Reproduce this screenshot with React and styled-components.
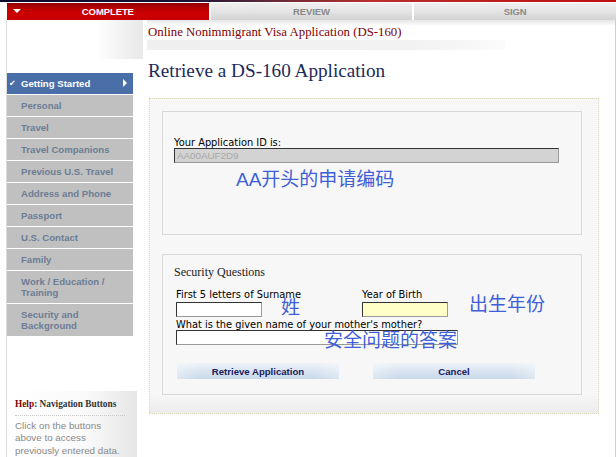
import styled, { createGlobalStyle } from "styled-components";

const GlobalStyle = createGlobalStyle`
  html, body { margin: 0; padding: 0; background: #fff; }
  body { font-family: "Liberation Sans", Arial, sans-serif; }
`;

const navItems = [
  { id: "start", title: "Getting Started", active: true },
  { id: "personal", title: "Personal" },
  { id: "travel", title: "Travel" },
  { id: "companions", title: "Travel Companions" },
  { id: "previous", title: "Previous U.S. Travel" },
  { id: "address", title: "Address and Phone" },
  { id: "passport", title: "Passport" },
  { id: "contact", title: "U.S. Contact" },
  { id: "family", title: "Family" },
  { id: "work", title: "Work / Education / Training", tall: true },
  { id: "security", title: "Security and Background", tall: true },
];

const App = () => {
  return (
    <Root>
      <GlobalStyle />
      <Banner />
      <Tabs>
        <Tab $active>
          <Caret />
          COMPLETE
        </Tab>
        <Tab>REVIEW</Tab>
        <Tab>SIGN</Tab>
      </Tabs>
      <Page>
        <Sidebar>
          <SideTop />
          <Nav>
            {navItems.map(({ id, title, active, tall }) => (
              <NavItem key={id} $active={active} $tall={tall}>
                {active && <Check>✔</Check>}
                <span>{title}</span>
                {active && <Arrow />}
              </NavItem>
            ))}
          </Nav>
          <Help>
            <HelpTitle>
              <em>Help</em>: Navigation Buttons
            </HelpTitle>
            <HelpText>Click on the buttons above to access previously entered data.</HelpText>
          </Help>
        </Sidebar>
        <Main>
          <AppName>Online Nonimmigrant Visa Application (DS-160)</AppName>
          <TitleRule />
          <PageTitle>Retrieve a DS-160 Application</PageTitle>
          <ContentBox>
            <Panel $height={124} $top={25}>
              <Label>Your Application ID is:</Label>
              <TextInput $width={385} $bg="#d3d3d3" readOnly value="AA00AUF2D9" $muted />
              <Note $left={73} $top={57}>AA开头的申请编码</Note>
            </Panel>
            <Panel $height={141} $top={10}>
              <SectionTitle>Security Questions</SectionTitle>
              <FieldRow>
                <Field $width={184} $gap={2}>
                  <Label>First 5 letters of Surname</Label>
                  <TextInput $width={86} readOnly value="" />
                </Field>
                <Field $gap={2}>
                  <Label>Year of Birth</Label>
                  <TextInput $width={86} $bg="#ffffc8" readOnly value="" />
                </Field>
              </FieldRow>
              <Field>
                <Label>What is the given name of your mother's mother?</Label>
                <TextInput $width={282} readOnly value="" />
              </Field>
              <Buttons>
                <Button>Retrieve Application</Button>
                <Button>Cancel</Button>
              </Buttons>
              <Note $left={118} $top={42}>姓</Note>
              <Note $left={306} $top={39}>出生年份</Note>
              <Note $left={161} $top={75}>安全问题的答案</Note>
            </Panel>
          </ContentBox>
        </Main>
      </Page>
    </Root>
  );
};

const Root = styled.div`
  width: 616px;
  height: 457px;
  overflow: hidden;
  background: #fff;
`;

const Banner = styled.div`
  height: 2px;
  background: linear-gradient(to right, #0b0b2e 0%, #14143a 30%, #6a2a3a 45%, #b8302c 60%, #c01010 100%);
  border-bottom: 1px solid #fff;
`;

const Tabs = styled.div`
  display: flex;
  gap: 2px;
  height: 17px;
  margin-left: 7px;
`;

const Tab = styled.div`
  position: relative;
  flex: 1;
  display: flex;
  align-items: center;
  justify-content: center;
  font-family: "Liberation Sans", Arial, sans-serif;
  font-weight: bold;
  font-size: 9.5px;
  letter-spacing: -0.1px;
  color: ${(p) => (p.$active ? "#fff" : "#8a8a8a")};
  background: ${(p) =>
    p.$active
      ? "linear-gradient(to bottom, #8e0000 0%, #b80000 30%, #cc0000 60%, #c80000 100%)"
      : "linear-gradient(to bottom, #f0f0f0 0%, #e4e4e4 50%, #d2d2d2 100%)"};
`;

const Caret = styled.span`
  position: absolute;
  left: 6px;
  top: 6px;
  width: 0;
  height: 0;
  border-left: 4px solid transparent;
  border-right: 4px solid transparent;
  border-top: 4px solid #fff;
`;

const Page = styled.div`
  display: flex;
  margin-left: 6px;
  width: 608px;
  height: 437px;
  border-left: 1px solid #dcdcdc;
  border-right: 1px solid #cfcfcf;
  background: linear-gradient(to bottom, #e6e6e6 0px, #fff 6px);
`;

const Sidebar = styled.div`
  width: 140px;
  flex-shrink: 0;
  display: flex;
  flex-direction: column;
  background: #fff;
`;

const SideTop = styled.div`
  height: 40px;
  width: 136px;
  margin-bottom: 14px;
  background: linear-gradient(to right, #fff 0%, #fff 65%, #e8e8e8 100%);
`;

const Nav = styled.ul`
  list-style: none;
  margin: 0;
  padding: 0;
  width: 126px;
  display: flex;
  flex-direction: column;
  gap: 1px;
`;

const NavItem = styled.li`
  position: relative;
  display: flex;
  align-items: center;
  height: ${(p) => (p.$tall ? "32px" : "21px")};
  padding: 0 10px 0 14px;
  box-sizing: border-box;
  background: ${(p) => (p.$active ? "#4a6ea8" : "#c0c0c0")};
  color: ${(p) => (p.$active ? "#fff" : "#6c7d95")};
  font-family: "Liberation Sans", Arial, sans-serif;
  font-weight: bold;
  font-size: 9.6px;
  line-height: 11px;
`;

const Check = styled.span`
  position: absolute;
  left: 2px;
  top: 5px;
  font-family: "DejaVu Sans", sans-serif;
  font-size: 8px;
  color: #fff;
`;

const Arrow = styled.span`
  position: absolute;
  right: 6px;
  top: 6px;
  width: 0;
  height: 0;
  border-top: 4px solid transparent;
  border-bottom: 4px solid transparent;
  border-left: 4px solid #fff;
`;

const Help = styled.div`
  margin-top: 55px;
  width: 130px;
  flex: 1;
  padding: 7px 12px 0 8px;
  box-sizing: border-box;
  background: linear-gradient(to right, #fff 0%, #fafafa 60%, #e6e6e6 100%);
`;

const HelpTitle = styled.div`
  font-family: "Liberation Serif", "Times New Roman", serif;
  font-weight: bold;
  font-size: 9.3px;
  line-height: 12px;
  color: #333;
  padding-bottom: 5px;
  border-bottom: 1px dotted #c8c8c8;
  em {
    font-style: normal;
    color: #800000;
  }
`;

const HelpText = styled.div`
  margin-top: 4px;
  font-family: "Liberation Sans", Arial, sans-serif;
  font-size: 9.8px;
  line-height: 12.5px;
  color: #8a8a8a;
`;

const Main = styled.div`
  flex: 1;
  padding-top: 4px;
`;

const AppName = styled.div`
  padding-left: 1px;
  font-family: "Liberation Serif", "Times New Roman", serif;
  font-size: 12.8px;
  line-height: 16px;
  color: #800000;
`;

const TitleRule = styled.div`
  height: 10px;
  width: 358px;
  background: linear-gradient(to right, #efefef 0%, #f2f2f2 75%, #fbfbfb 100%);
`;

const PageTitle = styled.h1`
  margin: 10px 0 0 1px;
  font-family: "Liberation Serif", "Times New Roman", serif;
  font-weight: normal;
  font-size: 19.2px;
  line-height: 22px;
  color: #1c2a5a;
`;

const ContentBox = styled.div`
  margin: 16px 0 0 2px;
  width: 450px;
  height: 316px;
  box-sizing: border-box;
  padding: 12px 16px 0 12px;
  display: flex;
  flex-direction: column;
  gap: 19px;
  border: 1px dotted #e0d6b8;
  background: linear-gradient(to bottom, #f7f7f7 0%, #f7f7f7 94%, #ececec 100%);
`;

const Panel = styled.div`
  position: relative;
  height: ${(p) => p.$height}px;
  box-sizing: border-box;
  padding: ${(p) => p.$top}px 10px 0 11px;
  border: 1px solid #d8d8d8;
  background: #f7f7f7;
`;

const Label = styled.div`
  font-family: "DejaVu Sans", Verdana, sans-serif;
  font-size: 9.85px;
  line-height: 11px;
  color: #000;
  white-space: nowrap;
`;

const TextInput = styled.input`
  display: block;
  width: ${(p) => p.$width}px;
  height: 15px;
  box-sizing: border-box;
  margin: 0;
  padding: 0 2px;
  border: 1px solid;
  border-color: #333 #999 #999 #333;
  background: ${(p) => p.$bg || "#fff"};
  font-family: "Liberation Sans", Arial, sans-serif;
  font-size: 9.8px;
  color: ${(p) => (p.$muted ? "#a8a8a8" : "#000")};
  outline: none;
`;

const SectionTitle = styled.div`
  font-family: "Liberation Serif", "Times New Roman", serif;
  font-size: 12px;
  line-height: 15px;
  color: #222;
  margin-bottom: 9px;
`;

const FieldRow = styled.div`
  display: flex;
  margin-bottom: 2px;
`;

const Field = styled.div`
  display: flex;
  flex-direction: column;
  gap: ${(p) => p.$gap || 0}px;
  padding-left: 2px;
  width: ${(p) => (p.$width ? `${p.$width}px` : "auto")};
`;

const Buttons = styled.div`
  display: flex;
  gap: 34px;
  margin: 18px 0 0 3px;
`;

const Button = styled.button`
  width: 162px;
  height: 16px;
  padding: 0;
  border: none;
  background: linear-gradient(to right, rgba(255,255,255,0.35), rgba(255,255,255,0) 15%, rgba(255,255,255,0) 85%, rgba(255,255,255,0.35)),
    linear-gradient(to bottom, #eef3f9 0%, #d9e5f1 50%, #c8d8e8 100%);
  font-family: "Liberation Sans", Arial, sans-serif;
  font-weight: bold;
  font-size: 9.6px;
  color: #1b1b5b;
`;

const Note = styled.div`
  position: absolute;
  left: ${(p) => p.$left}px;
  top: ${(p) => p.$top}px;
  font-family: "Liberation Sans", "Noto Sans CJK SC", sans-serif;
  font-size: 19px;
  line-height: 22px;
  color: #3f5fd8;
  white-space: nowrap;
`;

export default App;
